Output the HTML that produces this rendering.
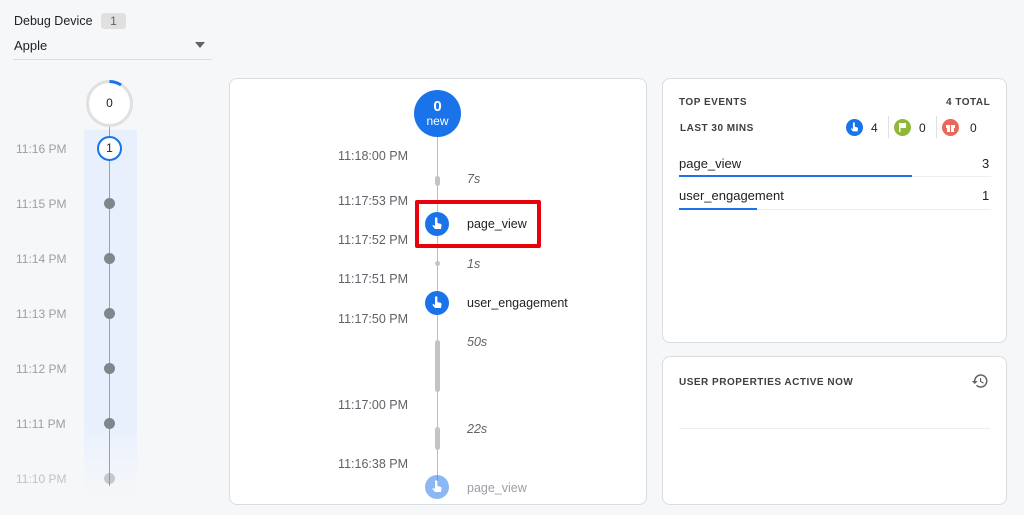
<!DOCTYPE html>
<html><head><style>
*{margin:0;padding:0;box-sizing:border-box}
body{width:1024px;height:515px;background:#f6f7f9;font-family:"Liberation Sans",sans-serif;position:relative;overflow:hidden;color:#202124}
.a{position:absolute}
.t{position:absolute;font-size:12px;color:#9aa0a6}
.ts{position:absolute;font-size:12.5px;color:#5f6368;width:120px;text-align:right;left:288px}
.dot{position:absolute;width:11px;height:11px;border-radius:50%;background:#80868b;left:104px}
.card{position:absolute;background:#fff;border:1px solid #dadce0;border-radius:8px}
.ic{position:absolute;width:24px;height:24px;border-radius:50%;background:#1a73e8;left:425px}
.ic svg{position:absolute;left:5px;top:4px}
.dur{position:absolute;font-size:12.5px;font-style:italic;color:#5f6368;left:467px}
.seg{position:absolute;left:435px;width:5px;border-radius:3px;background:#c4c4c4}
.hd{font-size:10px;font-weight:bold;letter-spacing:.5px;color:#3c4043}
</style></head><body>
<div class="a" style="left:14px;top:14px;font-size:12.5px">Debug Device</div>
<div class="a" style="left:101px;top:13px;width:25px;height:16px;background:#e0e0e0;border-radius:3px;font-size:12px;text-align:center;line-height:16px;color:#5f6368">1</div>
<div class="a" style="left:14px;top:38px;font-size:13px">Apple</div>
<div class="a" style="left:195px;top:42px;width:0;height:0;border-left:5px solid transparent;border-right:5px solid transparent;border-top:6px solid #5f6368"></div>
<div class="a" style="left:13px;top:59px;width:199px;height:1px;background:#dadce0"></div>

<div class="a" style="left:84px;top:130px;width:53px;height:365px;background:linear-gradient(#e8f0fe 80%,rgba(232,240,254,0))"></div>
<div class="a" style="left:109px;top:126px;width:1px;height:360px;background:#9aa0a6"></div>
<div class="a" style="left:86px;top:80px;width:47px;height:47px;border-radius:50%;background:#fff;border:3px solid #e0e0e0"></div>
<svg class="a" style="left:86px;top:80px" width="47" height="47"><path d="M23.5 1.5 A22 22 0 0 1 35 5" stroke="#1a73e8" stroke-width="3" fill="none"/></svg>
<div class="a" style="left:86px;top:80px;width:47px;height:47px;text-align:center;line-height:47px;font-size:12px">0</div>
<div class="a" style="left:97px;top:136px;width:25px;height:25px;border-radius:50%;background:#fff;border:2px solid #1a73e8;text-align:center;line-height:21px;font-size:12px">1</div>
<div class="t" style="left:16px;top:142px">11:16 PM</div>
<div class="t" style="left:16px;top:197px">11:15 PM</div><div class="dot" style="top:198px"></div>
<div class="t" style="left:16px;top:252px">11:14 PM</div><div class="dot" style="top:253px"></div>
<div class="t" style="left:16px;top:307px">11:13 PM</div><div class="dot" style="top:308px"></div>
<div class="t" style="left:16px;top:362px">11:12 PM</div><div class="dot" style="top:363px"></div>
<div class="t" style="left:16px;top:417px">11:11 PM</div><div class="dot" style="top:418px"></div>
<div class="t" style="left:16px;top:472px;opacity:.6">11:10 PM</div><div class="dot" style="top:473px;opacity:.4"></div>

<div class="card" style="left:229px;top:78px;width:418px;height:427px"></div>
<div class="a" style="left:437px;top:136px;width:1px;height:345px;background:#bdbdbd"></div>
<div class="a" style="left:414px;top:90px;width:47px;height:47px;border-radius:50%;background:#1a73e8;color:#fff;text-align:center"><div style="font-size:15px;font-weight:bold;margin-top:8px">0</div><div style="font-size:12px;margin-top:-1px">new</div></div>
<div class="ts" style="top:149px">11:18:00 PM</div>
<div class="seg" style="top:176px;height:10px"></div><div class="dur" style="top:172px">7s</div>
<div class="ts" style="top:194px">11:17:53 PM</div>
<div class="a" style="left:415px;top:200px;width:126px;height:48px;border:4px solid #e8000b;border-radius:2px"></div>
<div class="ic" style="top:212px"><svg width="14" height="16" viewBox="0 0 14 16"><path d="M5 2.5a1.2 1.2 0 0 1 2.4 0V7l3 .8c.8.2 1.2.9 1.1 1.7L11 13H5L2.3 9.8l.8-.8L5 10z" fill="#fff"/></svg></div>
<div class="a" style="left:467px;top:217px;font-size:12.5px">page_view</div>
<div class="ts" style="top:233px">11:17:52 PM</div>
<div class="seg" style="top:261px;height:5px"></div><div class="dur" style="top:257px">1s</div>
<div class="ts" style="top:272px">11:17:51 PM</div>
<div class="ic" style="top:291px"><svg width="14" height="16" viewBox="0 0 14 16"><path d="M5 2.5a1.2 1.2 0 0 1 2.4 0V7l3 .8c.8.2 1.2.9 1.1 1.7L11 13H5L2.3 9.8l.8-.8L5 10z" fill="#fff"/></svg></div>
<div class="a" style="left:467px;top:296px;font-size:12.5px">user_engagement</div>
<div class="ts" style="top:312px">11:17:50 PM</div>
<div class="seg" style="top:340px;height:52px"></div><div class="dur" style="top:335px">50s</div>
<div class="ts" style="top:398px">11:17:00 PM</div>
<div class="seg" style="top:427px;height:23px"></div><div class="dur" style="top:422px">22s</div>
<div class="ts" style="top:457px">11:16:38 PM</div>
<div class="ic" style="top:475px;opacity:.5"><svg width="14" height="16" viewBox="0 0 14 16"><path d="M5 2.5a1.2 1.2 0 0 1 2.4 0V7l3 .8c.8.2 1.2.9 1.1 1.7L11 13H5L2.3 9.8l.8-.8L5 10z" fill="#fff"/></svg></div>
<div class="a" style="left:467px;top:481px;font-size:12.5px;color:#9aa0a6">page_view</div>

<div class="card" style="left:662px;top:78px;width:345px;height:265px"></div>
<div class="a hd" style="left:679px;top:97px">TOP EVENTS</div>
<div class="a hd" style="left:946px;top:97px">4 TOTAL</div>
<div class="a hd" style="left:680px;top:123px">LAST 30 MINS</div>
<div class="a" style="left:846px;top:119px;width:17px;height:17px;border-radius:50%;background:#1a73e8"><svg class="a" style="left:3px;top:2px" width="11" height="13" viewBox="0 0 14 16"><path d="M5 2.5a1.2 1.2 0 0 1 2.4 0V7l3 .8c.8.2 1.2.9 1.1 1.7L11 13H5L2.3 9.8l.8-.8L5 10z" fill="#fff"/></svg></div><div class="a" style="left:871px;top:121px;font-size:12px">4</div>
<div class="a" style="left:888px;top:116px;width:1px;height:22px;background:#e0e0e0"></div>
<div class="a" style="left:894px;top:119px;width:17px;height:17px;border-radius:50%;background:#8fb83a"><svg class="a" style="left:4px;top:4px" width="9" height="9" viewBox="0 0 9 9"><path d="M1 0h7v5H2.5v4H1z" fill="#fff"/></svg></div><div class="a" style="left:919px;top:121px;font-size:12px">0</div>
<div class="a" style="left:936px;top:116px;width:1px;height:22px;background:#e0e0e0"></div>
<div class="a" style="left:942px;top:119px;width:17px;height:17px;border-radius:50%;background:#e8685a"><svg class="a" style="left:4px;top:4px" width="9" height="9" viewBox="0 0 9 9"><path d="M0 2h9v3H0zM1 5h7v4H1z" fill="#fff"/><path d="M4.5 2v7" stroke="#e8685a"/></svg></div><div class="a" style="left:970px;top:121px;font-size:12px">0</div>
<div class="a" style="left:679px;top:156px;font-size:13px">page_view</div><div class="a" style="left:982px;top:156px;font-size:13px">3</div>
<div class="a" style="left:679px;top:176px;width:312px;height:1px;background:#eee"></div>
<div class="a" style="left:679px;top:175px;width:233px;height:2px;background:#1a73e8"></div>
<div class="a" style="left:679px;top:188px;font-size:13px">user_engagement</div><div class="a" style="left:982px;top:188px;font-size:13px">1</div>
<div class="a" style="left:679px;top:209px;width:312px;height:1px;background:#eee"></div>
<div class="a" style="left:679px;top:208px;width:78px;height:2px;background:#1a73e8"></div>

<div class="card" style="left:662px;top:356px;width:345px;height:149px"></div>
<div class="a hd" style="left:679px;top:377px">USER PROPERTIES ACTIVE NOW</div>
<svg class="a" style="left:971px;top:372px" width="18" height="18" viewBox="0 0 24 24"><path d="M13 3a9 9 0 0 0-9 9H1l4 4 4-4H6a7 7 0 1 1 2.05 4.95l-1.42 1.42A9 9 0 1 0 13 3zm-1 5v5l4.25 2.52.77-1.28-3.52-2.09V8z" fill="#5f6368"/></svg>
<div class="a" style="left:679px;top:428px;width:311px;height:1px;background:#eee"></div>
</body></html>
